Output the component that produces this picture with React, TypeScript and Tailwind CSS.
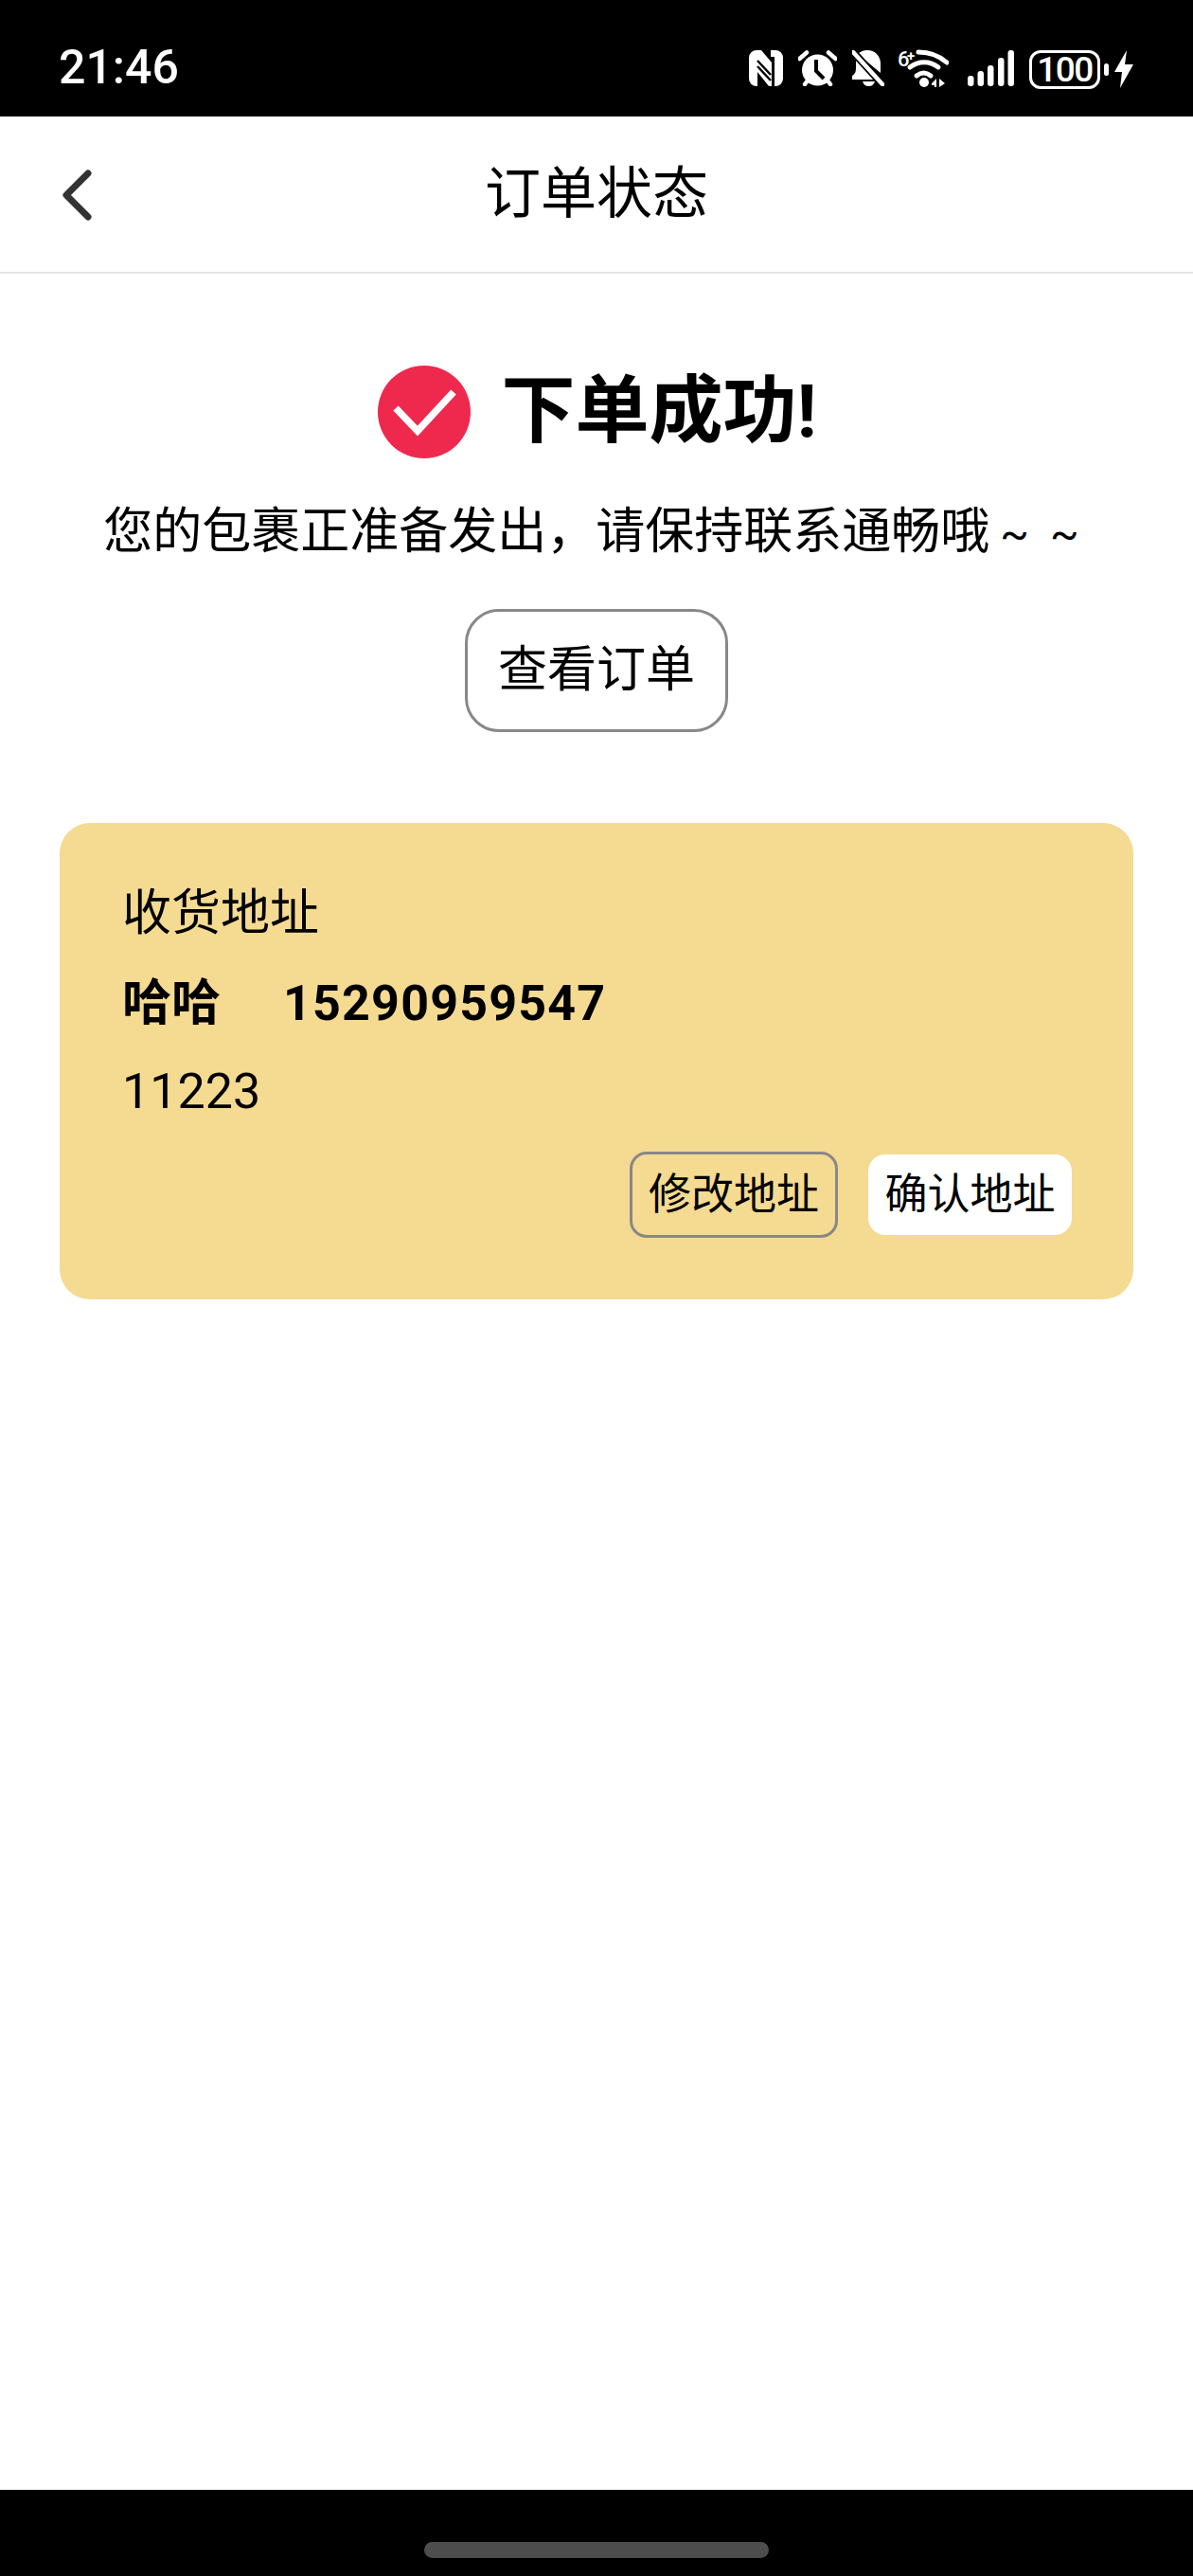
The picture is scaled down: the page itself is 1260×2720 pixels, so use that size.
import React from "react";

const cjk = "font-['Roboto','Noto_Sans_CJK_SC',sans-serif]";

function StatusIcons() {
  return (
    <div className="flex items-start">
      <svg width="36" height="38" viewBox="0 0 36 38" className="mt-[53px]">
        <path fill="#fff" fillRule="evenodd" d="M8 0h5l11 13v25h-3L9 23V38H8a8 8 0 0 1-8-8V8a8 8 0 0 1 8-8Zm15 0h5a8 8 0 0 1 8 8v22a8 8 0 0 1-8 8h-1V7h-4V0Z" />
        <path stroke="#000" strokeWidth="2.5" fill="none" d="M9 11l14 15M9 17l14 15" />
      </svg>
      <svg width="41" height="38" viewBox="0 0 41 38" className="mt-[53px] ml-[16px]">
        <circle cx="20.5" cy="21" r="16.5" fill="#fff" />
        <path d="M19 10v12l8 8" stroke="#000" strokeWidth="4" fill="none" />
        <path d="M1.500 9 9 2.500M39.500 9 32 2.500M7 36l3-4M34 36l-3-4" stroke="#fff" strokeWidth="4.500" strokeLinecap="round" fill="none" />
      </svg>
      <svg width="34" height="38" viewBox="0 0 34 38" className="mt-[53px] ml-[16px]">
        <path fill="#fff" d="M16 0c8 0 14 6 14 14v10L6 4c3-2.500 6-4 10-4ZM4 9l21 22H0v-4c3-2 4-4 4-8V9ZM11 33h13c-1 3-3 5-6.500 5S12 36 11 33Z" />
        <path d="M2 3l30 33" stroke="#000" strokeWidth="8" />
        <path d="M1 2l31 34" stroke="#fff" strokeWidth="4.500" strokeLinecap="round" />
      </svg>
      <svg width="54" height="44" viewBox="0 0 54 44" className="mt-[49px] ml-[14px]">
        <text x="0" y="21" fill="#fff" fontSize="22" fontWeight="500" fontFamily="Roboto, sans-serif">6</text>
        <text x="10" y="15" fill="#fff" fontSize="15" fontWeight="700" fontFamily="Roboto, sans-serif">+</text>
        <path d="M22 6c11 0 21 3 30 11" stroke="#fff" strokeWidth="5" fill="none" strokeLinecap="round" />
        <path d="M13 22c9-7 21-7 30 0" stroke="#fff" strokeWidth="5" fill="none" strokeLinecap="round" />
        <path d="M20 31c5-4 10-4 15 0" stroke="#fff" strokeWidth="5" fill="none" strokeLinecap="round" />
        <circle cx="28" cy="38" r="5" fill="#fff" />
        <path d="M36 39l5-5v9h-2v-2h-3ZM44 34l6 5-6 4Z" fill="#fff" />
      </svg>
      <svg width="49" height="38" viewBox="0 0 49 38" className="mt-[53px] ml-[20px]">
        <rect x="0" y="27" width="6.500" height="11" rx="3" fill="#fff" />
        <rect x="10.500" y="22" width="6.500" height="16" rx="3" fill="#fff" />
        <rect x="21" y="16" width="6.500" height="22" rx="3" fill="#fff" />
        <rect x="32" y="8" width="6.500" height="30" rx="3" fill="#fff" />
        <rect x="42.500" y="0" width="6.500" height="38" rx="3" fill="#fff" />
      </svg>
      <div className="mt-[53px] ml-[16px] w-[75px] h-[41px] rounded-[12px] border-[3px] border-white flex items-center justify-center">
        <span className="font-['Roboto',sans-serif] text-[37px] leading-none font-medium tracking-[-1.5px] text-white">100</span>
      </div>
      <div className="mt-[67px] ml-[4px] w-[5px] h-[13px] rounded-full bg-white" />
      <svg width="20" height="40" viewBox="0 0 20 40" className="mt-[53px] ml-[6px]">
        <path fill="#fff" d="M13 0 0 23h8l-2 17L20 15h-9Z" />
      </svg>
    </div>
  );
}

export default function App() {
  return (
    <div className={`w-[1260px] h-[2720px] flex flex-col bg-white text-black ${cjk}`}>
      <div className="h-[123px] shrink-0 bg-black flex items-start justify-between pl-[62px] pr-[63px]">
        <span className="mt-[43px] text-[50px] leading-[56px] font-medium text-white font-['Roboto',sans-serif]">21:46</span>
        <StatusIcons />
      </div>

      <div className="relative h-[166px] shrink-0 border-b-[2px] border-[#e6e6e6] flex items-center justify-center">
        <svg width="34" height="54" viewBox="0 0 34 54" className="absolute left-[64px] top-[56px]">
          <path d="M29 4 6 27l23 23" stroke="#333" strokeWidth="7" fill="none" strokeLinecap="round" strokeLinejoin="round" />
        </svg>
        <h1 className="text-[59px] leading-[82px] font-normal">订单状态</h1>
      </div>

      <main className="flex-1 flex flex-col items-center pt-[97px]">
        <div className="ml-[2px] flex items-center gap-[32px]">
          <svg width="98" height="98" viewBox="0 0 98 98">
            <circle cx="49" cy="49" r="49" fill="#ee294d" />
            <path d="M19 45l23 24 38-41" stroke="#fff" strokeWidth="7.500" fill="none" />
          </svg>
          <div className="text-[78px] leading-[98px] font-bold">下单成功!</div>
        </div>
        <p className="mt-[42px] text-[52px] leading-[72px] whitespace-nowrap">
          您的包裹正准备发出{"\uFF0C"}请保持联系通畅哦
          <span className="ml-[11px] mr-[11px] text-[45px] [word-spacing:11px]">~ ~</span>
        </p>
        <button className="mt-[43px] w-[278px] h-[130px] rounded-[36px] border-[3px] border-[#888888] bg-white text-[52px] leading-none">查看订单</button>

        <section className="mt-[96px] w-[1134px] bg-[#f5da92] rounded-[32px] pt-[48px] pb-[65px] pl-[66px] pr-[65px]">
          <div className="text-[52px] leading-[95px]">收货地址</div>
          <div className="text-[52px] leading-[95px] font-bold flex">
            <span>哈哈</span>
            <span className="ml-[66px] tracking-[1.2px]">15290959547</span>
          </div>
          <div className="text-[52px] leading-[92px]">11223</div>
          <div className="mt-[17px] flex items-center justify-end gap-[32px]">
            <button className="w-[220px] h-[91px] rounded-[18px] border-[3px] border-[#888888] text-[45px] leading-none">修改地址</button>
            <button className="w-[215px] h-[85px] rounded-[18px] bg-white text-[45px] leading-none">确认地址</button>
          </div>
        </section>
      </main>

      <div className="h-[91px] shrink-0 bg-black flex justify-center pt-[55px]">
        <div className="w-[364px] h-[17px] rounded-full bg-[#4d4d4d]" />
      </div>
    </div>
  );
}
